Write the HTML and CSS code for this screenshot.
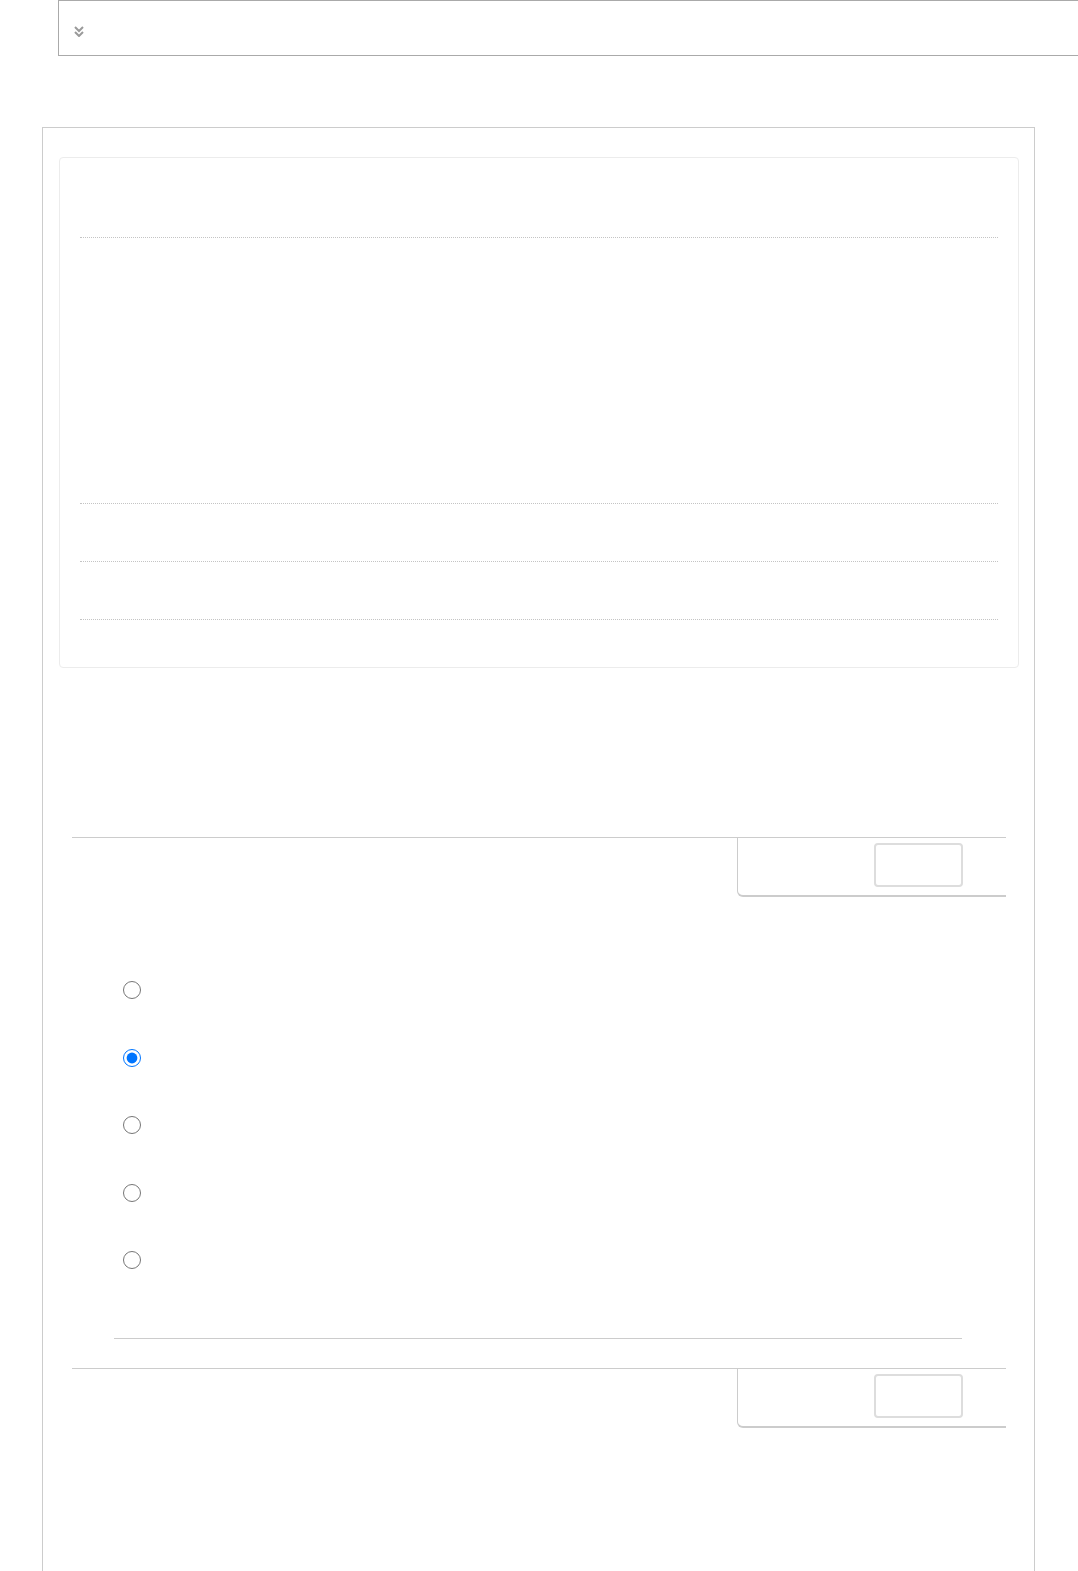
FILE: index.html
```html
<!DOCTYPE html>
<html>

<head>
  <title>Survey</title>
  <link rel="stylesheet" href="styles.css">
</head>

<body>

  <header class="toolbar">
    <button class="toggle" type="button" aria-label="Expand">
      <svg width="10" height="11" viewBox="0 0 10 11">
        <polyline points="1,1 5,5 9,1" fill="none" stroke="#9a9a9a" stroke-width="2" />
        <polyline points="1,6 5,10 9,6" fill="none" stroke="#9a9a9a" stroke-width="2" />
      </svg>
    </button>
  </header>

  <main class="panel">
    <section class="card">
      <div class="row row-head"></div>
      <div class="row row-body"></div>
      <div class="row row-line"></div>
      <div class="row row-line"></div>
    </section>

    <div class="tabbar tabbar-first">
      <div class="tab">
        <div class="tab-button"></div>
      </div>
    </div>

    <form class="choices">
      <input type="radio" name="choice" value="1">
      <input type="radio" name="choice" value="2" checked>
      <input type="radio" name="choice" value="3">
      <input type="radio" name="choice" value="4">
      <input type="radio" name="choice" value="5">
    </form>

    <hr class="divider">

    <div class="tabbar tabbar-second">
      <div class="tab">
        <div class="tab-button"></div>
      </div>
    </div>
  </main>

</body>

</html>
```

FILE: styles.css
```css
html,
body {
  overflow: hidden;
}

body {
  margin: 0;
  font-family: 'Liberation Sans', Arial, sans-serif;
  background: #fff;
  color: #333;
}

.toolbar {
  margin-left: 58px;
  height: 54px;
  border: 1px solid #aaa;
  border-right: none;
  display: flex;
  align-items: center;
  padding-left: 15px;
}

.toggle {
  border: none;
  background: none;
  padding: 0;
  margin-top: 6px;
  display: flex;
}

.panel {
  margin: 71px 0 0 42px;
  width: 991px;
  min-height: 1500px;
  border: 1px solid #ccc;
  border-bottom: none;
  display: flex;
  flex-direction: column;
}

.card {
  margin: 29px 15px 0 16px;
  padding: 0 20px 47px;
  border: 1px solid #ececec;
  border-radius: 4px;
}

.row {
  border-bottom: 1px dotted #c4c4c4;
}

.row-head {
  height: 79px;
}

.row-body {
  height: 265px;
}

.row-line {
  height: 57px;
}

.tabbar {
  margin: 169px 28px 0 29px;
  border-top: 1px solid #ccc;
  display: flex;
  justify-content: flex-end;
}

.tabbar-second {
  margin-top: 29px;
}

.tab {
  width: 269px;
  height: 59px;
  border-left: 1px solid #ccc;
  border-bottom: 2px solid #ccc;
  border-bottom-left-radius: 6px;
  box-sizing: border-box;
  padding: 5px 43px 0 0;
  display: flex;
  justify-content: flex-end;
}

.tab-button {
  width: 85px;
  height: 40px;
  border: 2px solid #ddd;
  border-radius: 4px;
}

.choices {
  margin: 84px 0 0 80px;
  display: flex;
  flex-direction: column;
  gap: 49.5px;
}

.choices input {
  width: 18px;
  height: 18px;
  margin: 0;
}

.divider {
  margin: 69px 0 0 71px;
  width: 848px;
  height: 0;
  border: none;
  border-top: 1px solid #ccc;
}
```
